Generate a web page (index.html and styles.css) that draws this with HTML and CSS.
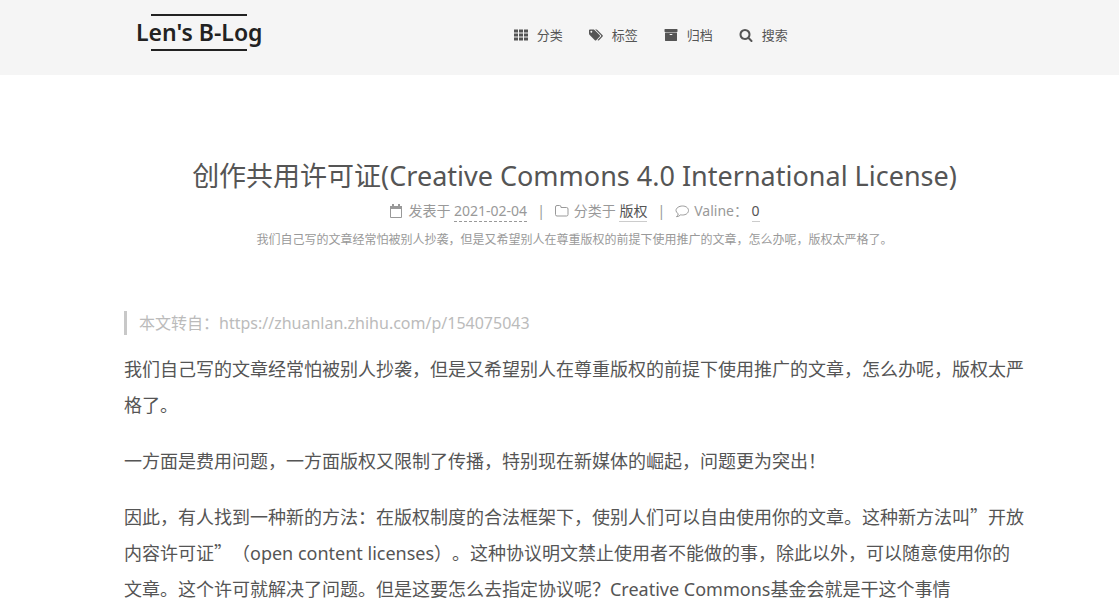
FILE: index.html
```html
<!DOCTYPE html>
<html lang="zh-CN">
<head>
<meta charset="utf-8">
<meta name="viewport" content="width=device-width, initial-scale=1">
<title>创作共用许可证(Creative Commons 4.0 International License) | Len's B-Log</title>
<link rel="stylesheet" href="styles.css">
</head>
<body>
<header class="site-header">
  <a class="brand" href="#">Len's B-Log</a>
  <nav class="menu">
    <a class="menu-item" href="#"><svg class="icon" viewBox="0 0 14 14"><path d="M0 1.500h4v3H0zM5 1.500h4v3H5zM10 1.500h4v3h-4zM0 5.500h4v3H0zM5 5.500h4v3H5zM10 5.500h4v3h-4zM0 9.500h4v3H0zM5 9.500h4v3H5zM10 9.500h4v3h-4z"/></svg>分类</a>
    <a class="menu-item" href="#"><svg class="icon" viewBox="0 0 1920 1792"><path d="M448 448q0-53-37.500-90.500T320 320t-90.500 37.500T192 448t37.500 90.500T320 576t90.500-37.500T448 448zm1067 576q0 53-37 90l-491 492q-39 37-91 37-53 0-90-37L91 890q-38-37-64.500-101T0 672V256q0-52 38-90t90-38h416q53 0 117 26.500T763 219l715 714q37 39 37 91zm384 0q0 53-37 90l-491 492q-39 37-91 37-36 0-59-14t-53-45l470-470q37-37 37-90 0-52-37-91L923 219q-38-38-102-64.500T704 128h224q53 0 117 26.500t102 64.500l715 714q37 39 37 91z"/></svg>标签</a>
    <a class="menu-item" href="#"><svg class="icon" viewBox="0 0 1792 1792"><path d="M1088 832q0-26-19-45t-45-19H768q-26 0-45 19t-19 45 19 45 45 19h256q26 0 45-19t19-45zm576-192v960q0 26-19 45t-45 19H192q-26 0-45-19t-19-45V640q0-26 19-45t45-19h1408q26 0 45 19t19 45zm64-448v256q0 26-19 45t-45 19H128q-26 0-45-19t-19-45V192q0-26 19-45t45-19h1536q26 0 45 19t19 45z"/></svg>归档</a>
    <a class="menu-item" href="#"><svg class="icon" viewBox="0 0 1792 1792"><path d="M1216 832q0-185-131.500-316.500T768 384 451.500 515.500 320 832t131.500 316.500T768 1280t316.500-131.500T1216 832zm512 832q0 52-38 90t-90 38q-54 0-90-38l-343-342q-179 124-399 124-143 0-273.500-55.500t-225-150-150-225T64 832t55.500-273.500 150-225 225-150T768 128t273.500 55.500 225 150 150 225T1472 832q0 220-124 399l343 343q37 37 37 90z"/></svg>搜索</a>
  </nav>
</header>
<main class="content">
  <article>
    <header class="post-header">
      <h1 class="post-title">创作共用许可证(Creative Commons 4.0 International License)</h1>
      <div class="post-meta">
        <span class="meta-item"><svg class="icon" viewBox="0 0 14 14"><path d="M1.500 3h11v10.500h-11z" fill="none" stroke="currentColor"/><path d="M1 2h12v3H1zM3 0h2v3H3zM9 0h2v3H9z"/></svg><span>发表于 <time class="date" datetime="2021-02-04">2021-02-04</time></span></span>
        <span class="divider">|</span>
        <span class="meta-item"><svg class="icon" viewBox="0 0 14 14"><path d="M.5 3q0-1.500 1.500-1.500h2.500Q6 1.500 6 3v.5h5.500q1.500 0 1.500 1.500v5.500q0 1.500-1.500 1.500H2Q.5 12 .5 10.500z" fill="none" stroke="currentColor"/></svg><span>分类于 <a class="meta-link" href="#">版权</a></span></span>
        <span class="divider">|</span>
        <span class="meta-item"><svg class="icon" viewBox="0 0 14 14"><path d="M7.500 2C11 2 13.500 4 13.500 6.500S11 11 7.500 11q-1 0-1.800-.2Q4 12.500 1.500 12.700 3 11.500 3.300 9.800 1 8.500 1 6.500C1 4 4 2 7.500 2z" fill="none" stroke="currentColor"/></svg><span>Valine： <a class="meta-link" href="#">0</a></span></span>
      </div>
      <p class="post-description">我们自己写的文章经常怕被别人抄袭，但是又希望别人在尊重版权的前提下使用推广的文章，怎么办呢，版权太严格了。</p>
    </header>
    <div class="post-body">
      <blockquote class="source">本文转自：https://zhuanlan.zhihu.com/p/154075043</blockquote>
      <p>我们自己写的文章经常怕被别人抄袭，但是又希望别人在尊重版权的前提下使用推广的文章，怎么办呢，版权太严格了。</p>
      <p>一方面是费用问题，一方面版权又限制了传播，特别现在新媒体的崛起，问题更为突出！</p>
      <p>因此，有人找到一种新的方法：在版权制度的合法框架下，使别人们可以自由使用你的文章。这种新方法叫<span class="quote">”</span>开放内容许可证<span class="quote">”</span>（open content licenses）。这种协议明文禁止使用者不能做的事，除此以外，可以随意使用你的文章。这个许可就解决了问题。但是这要怎么去指定协议呢？Creative Commons基金会就是干这个事情</p>
    </div>
  </article>
</main>
</body>
</html>
```
FILE: styles.css
```css
* { box-sizing: border-box; }
body {
  margin: 0;
  background: #fff;
  color: #555;
  font-family: "Noto Sans", "Noto Sans CJK SC", sans-serif;
  font-size: 18px;
  line-height: 36px;
  text-spacing-trim: space-all;
}
a { color: inherit; text-decoration: none; }
.icon { width: 14px; height: 14px; fill: currentColor; flex: none; }
.site-header {
  display: flex;
  align-items: flex-start;
  padding: 14px 92px 24px 136px;
  background: #f5f5f5;
}
.brand {
  display: flex;
  flex-direction: column;
  align-items: center;
  margin-right: 12px;
  color: #222;
  font-size: 23px;
  font-weight: 600;
  line-height: 33px;
}
.brand::before, .brand::after {
  content: "";
  width: 96px;
  height: 2px;
  background: #222;
}
.menu {
  display: flex;
  flex: 1;
  justify-content: center;
  gap: 26px;
  padding-top: 11px;
  font-size: 13px;
  line-height: 20px;
}
.menu-item { display: flex; align-items: center; gap: 9px; }
.content { padding: 83px 94px 0 124px; }
.post-header { margin-bottom: 61px; text-align: center; }
.post-title { margin: 0; font-size: 27px; font-weight: 400; line-height: 36px; }
.post-meta {
  display: flex;
  flex-wrap: wrap;
  justify-content: center;
  gap: 10px;
  margin-top: 6px;
  color: #999;
  font-size: 14px;
  line-height: 22px;
}
.meta-item { display: flex; align-items: center; gap: 5px; }
.date { display: inline-block; line-height: 20px; border-bottom: 1px dashed #999; }
.meta-link { display: inline-block; color: #555; line-height: 20px; border-bottom: 1px solid #ccc; }
.post-description { margin: 8px 0 0; color: #999; font-size: 12px; line-height: 20px; }
.source {
  margin: 0 0 16px;
  padding-left: 12px;
  border-left: 3px solid #c8c8c8;
  color: #bbb;
  font-size: 16px;
  line-height: 24px;
}
.post-body p { margin: 0 0 20px; }
.post-body p:last-child { margin-bottom: 0; }
.quote { font-family: "Noto Sans CJK SC", sans-serif; line-height: 1; }
```
